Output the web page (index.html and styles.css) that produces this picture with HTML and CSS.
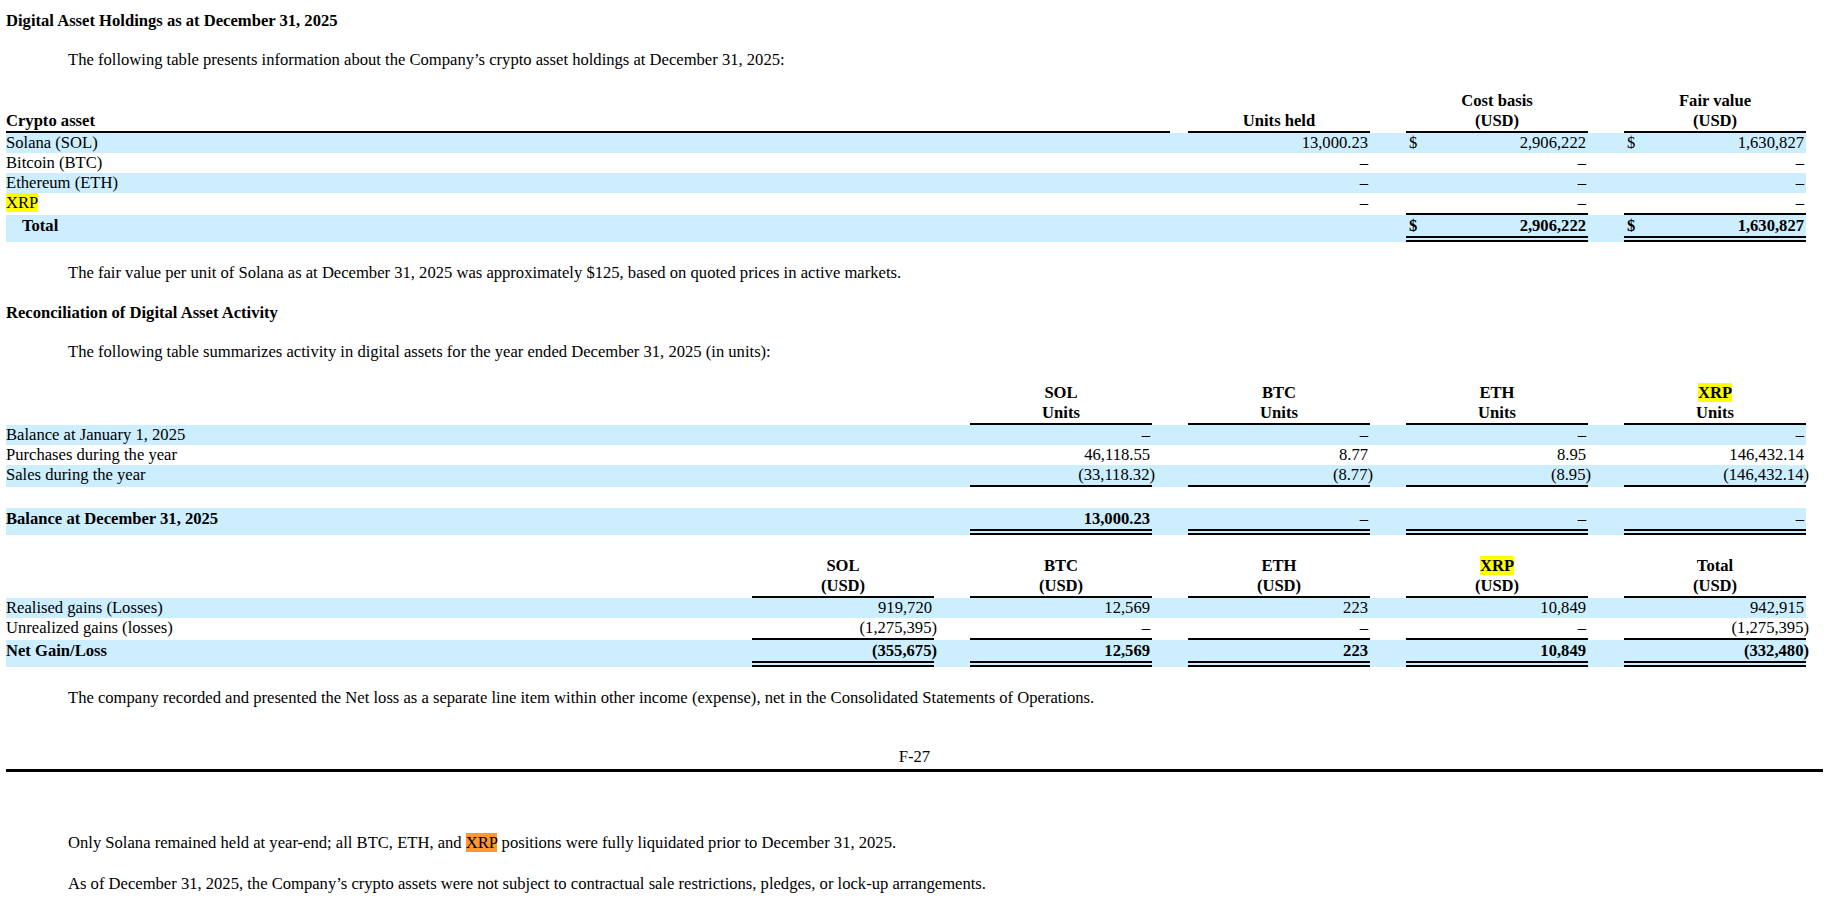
FILE: index.html
```html
<!DOCTYPE html>
<html lang="en">
<head>
    <meta charset="UTF-8">
    <title>Digital Asset Holdings</title>
    <link rel="stylesheet" href="styles.css">
</head>
<body>
    <div class="page">
        <h2 class="heading">Digital Asset Holdings as at December 31, 2025</h2>
        <p class="para">The following table presents information about the Company’s crypto asset holdings at December 31, 2025:</p>

        <table class="fin holdings">
            <colgroup>
                <col class="lbl">
                <col class="gap-s">
                <col class="num">
                <col class="gap">
                <col class="num">
                <col class="gap">
                <col class="num">
            </colgroup>
            <tr class="head">
                <th class="left rule">Crypto asset</th>
                <th></th>
                <th class="rule">Units held</th>
                <th></th>
                <th class="rule">Cost basis<br>(USD)</th>
                <th></th>
                <th class="rule">Fair value<br>(USD)</th>
            </tr>
            <tr class="shade">
                <td>Solana (SOL)</td>
                <td></td>
                <td class="val">13,000.23</td>
                <td></td>
                <td class="val"><span class="cur">$</span>2,906,222</td>
                <td></td>
                <td class="val"><span class="cur">$</span>1,630,827</td>
            </tr>
            <tr>
                <td>Bitcoin (BTC)</td>
                <td></td>
                <td class="val">–</td>
                <td></td>
                <td class="val">–</td>
                <td></td>
                <td class="val">–</td>
            </tr>
            <tr class="shade">
                <td>Ethereum (ETH)</td>
                <td></td>
                <td class="val">–</td>
                <td></td>
                <td class="val">–</td>
                <td></td>
                <td class="val">–</td>
            </tr>
            <tr>
                <td><span class="hl">XRP</span></td>
                <td></td>
                <td class="val">–</td>
                <td></td>
                <td class="val rule">–</td>
                <td></td>
                <td class="val rule">–</td>
            </tr>
            <tr class="shade total">
                <td class="indent">Total</td>
                <td></td>
                <td></td>
                <td></td>
                <td class="val dbl"><span class="cur">$</span>2,906,222</td>
                <td></td>
                <td class="val dbl"><span class="cur">$</span>1,630,827</td>
            </tr>
        </table>

        <p class="para after-table">The fair value per unit of Solana as at December 31, 2025 was approximately $125, based on quoted prices in active markets.</p>

        <h2 class="heading spaced">Reconciliation of Digital Asset Activity</h2>
        <p class="para">The following table summarizes activity in digital assets for the year ended December 31, 2025 (in units):</p>

        <table class="fin activity">
            <colgroup>
                <col class="lbl">
                <col class="gap"><col class="num">
                <col class="gap"><col class="num">
                <col class="gap"><col class="num">
                <col class="gap"><col class="num">
            </colgroup>
            <tr class="head">
                <th></th>
                <th></th><th class="rule">SOL<br>Units</th>
                <th></th><th class="rule">BTC<br>Units</th>
                <th></th><th class="rule">ETH<br>Units</th>
                <th></th><th class="rule"><span class="hl">XRP</span><br>Units</th>
            </tr>
            <tr class="shade">
                <td>Balance at January 1, 2025</td>
                <td></td><td class="val">–</td>
                <td></td><td class="val">–</td>
                <td></td><td class="val">–</td>
                <td></td><td class="val">–</td>
            </tr>
            <tr>
                <td>Purchases during the year</td>
                <td></td><td class="val">46,118.55</td>
                <td></td><td class="val">8.77</td>
                <td></td><td class="val">8.95</td>
                <td></td><td class="val">146,432.14</td>
            </tr>
            <tr class="shade">
                <td>Sales during the year</td>
                <td></td><td class="val rule">(33,118.32<span class="rp">)</span></td>
                <td></td><td class="val rule">(8.77<span class="rp">)</span></td>
                <td></td><td class="val rule">(8.95<span class="rp">)</span></td>
                <td></td><td class="val rule">(146,432.14<span class="rp">)</span></td>
            </tr>
            <tr class="blank">
                <td colspan="9"></td>
            </tr>
            <tr class="shade total">
                <td>Balance at December 31, 2025</td>
                <td></td><td class="val dbl">13,000.23</td>
                <td></td><td class="val dbl plain">–</td>
                <td></td><td class="val dbl plain">–</td>
                <td></td><td class="val dbl plain">–</td>
            </tr>
        </table>

        <table class="fin gains">
            <colgroup>
                <col class="lbl">
                <col class="gap"><col class="num">
                <col class="gap"><col class="num">
                <col class="gap"><col class="num">
                <col class="gap"><col class="num">
                <col class="gap"><col class="num">
            </colgroup>
            <tr class="head">
                <th></th>
                <th></th><th class="rule">SOL<br>(USD)</th>
                <th></th><th class="rule">BTC<br>(USD)</th>
                <th></th><th class="rule">ETH<br>(USD)</th>
                <th></th><th class="rule"><span class="hl">XRP</span><br>(USD)</th>
                <th></th><th class="rule">Total<br>(USD)</th>
            </tr>
            <tr class="shade">
                <td>Realised gains (Losses)</td>
                <td></td><td class="val">919,720</td>
                <td></td><td class="val">12,569</td>
                <td></td><td class="val">223</td>
                <td></td><td class="val">10,849</td>
                <td></td><td class="val">942,915</td>
            </tr>
            <tr>
                <td>Unrealized gains (losses)</td>
                <td></td><td class="val rule">(1,275,395<span class="rp">)</span></td>
                <td></td><td class="val rule">–</td>
                <td></td><td class="val rule">–</td>
                <td></td><td class="val rule">–</td>
                <td></td><td class="val rule">(1,275,395<span class="rp">)</span></td>
            </tr>
            <tr class="shade total">
                <td>Net Gain/Loss</td>
                <td></td><td class="val dbl">(355,675<span class="rp">)</span></td>
                <td></td><td class="val dbl">12,569</td>
                <td></td><td class="val dbl">223</td>
                <td></td><td class="val dbl">10,849</td>
                <td></td><td class="val dbl">(332,480<span class="rp">)</span></td>
            </tr>
        </table>

        <p class="para after-gains">The company recorded and presented the Net loss as a separate line item within other income (expense), net in the Consolidated Statements of Operations.</p>

        <div class="page-no">F-27</div>
        <hr class="page-break">

        <p class="para next-page">Only Solana remained held at year-end; all BTC, ETH, and <span class="hl-current">XRP</span> positions were fully liquidated prior to December 31, 2025.</p>
        <p class="para loose">As of December 31, 2025, the Company’s crypto assets were not subject to contractual sale restrictions, pledges, or lock-up arrangements.</p>
    </div>
</body>
</html>
```

FILE: styles.css
```css
body {
    margin: 0;
    font-family: "Liberation Serif", "Times New Roman", serif;
    font-size: 16.6px;
    line-height: 20px;
    color: #000;
    background-color: #fff;
}

.page {
    margin: 0 7px 0 6px;
    padding-top: 11px;
}

.heading {
    margin: 0;
    font-size: 16.6px;
    font-weight: bold;
    line-height: 20px;
}

.heading.spaced {
    margin-top: 20px;
}

.para {
    margin: 19px 0 0 62px;
}

.para.after-table {
    margin-top: 21px;
}

.para.after-gains {
    margin-top: 21px;
}

.para.next-page {
    margin-top: 61px;
}

.para.loose {
    margin-top: 21px;
}

/* financial tables */
.fin {
    width: 1800px;
    table-layout: fixed;
    border-collapse: separate;
    border-spacing: 0;
}

.fin col.num {
    width: 182px;
}

.fin col.gap {
    width: 36px;
}

.fin col.gap-s {
    width: 18px;
}

.holdings {
    margin-top: 21px;
}

.activity {
    margin-top: 21px;
}

.gains {
    margin-top: 21px;
}

.fin th,
.fin td {
    padding: 0;
    height: 20px;
    line-height: 20px;
    vertical-align: top;
    white-space: nowrap;
}

.fin th {
    font-weight: bold;
    text-align: center;
    vertical-align: bottom;
}

.fin th.left {
    text-align: left;
}

.fin .shade {
    background-color: #cceeff;
}

.fin .total td {
    font-weight: bold;
    padding-top: 1px;
}

.fin .total td.plain {
    font-weight: normal;
}

.fin .blank td {
    height: 21px;
}

.fin .val {
    text-align: right;
    padding-right: 2px;
}

.fin .rule {
    border-bottom: 2px solid #000;
}

.fin .dbl {
    border-bottom: 6px double #000;
}

.fin .indent {
    padding-left: 16px;
}

.cur {
    float: left;
    padding-left: 3px;
}

.rp {
    margin-right: -5px;
}

.hl {
    background-color: #ffff00;
}

.hl-current {
    background-color: #ff9632;
}

.page-no {
    margin-top: 39px;
    text-align: center;
}

.page-break {
    margin: 2px 0 0 0;
    border: none;
    border-top: 3px solid #000;
    height: 0;
}
```
